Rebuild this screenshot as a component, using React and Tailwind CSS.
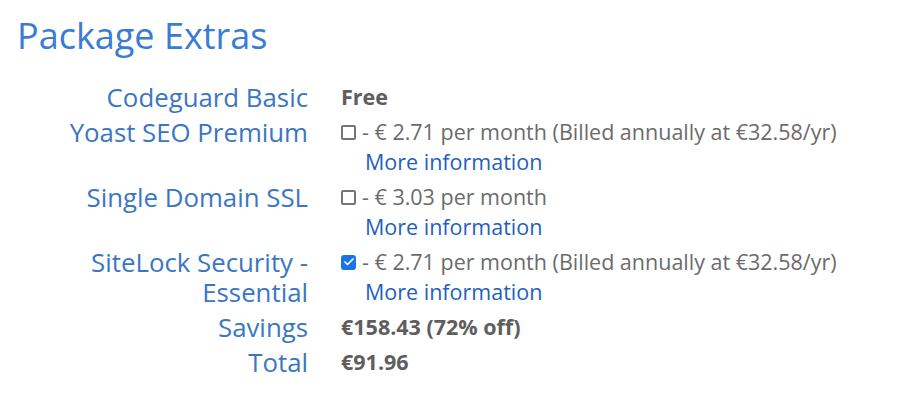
import { Check } from 'lucide-react';

const rows = [
  { label: ['Codeguard Basic'], value: 'Free', bold: true },
  { label: ['Yoast SEO Premium'], value: '- € 2.71 per month (Billed annually at €32.58/yr)', box: 'off', more: true },
  { label: ['Single Domain SSL'], value: '- € 3.03 per month', box: 'off', more: true },
  { label: ['SiteLock Security -', 'Essential'], value: '- € 2.71 per month (Billed annually at €32.58/yr)', box: 'on', more: true },
  { label: ['Savings'], value: '€158.43 (72% off)', bold: true },
  { label: ['Total'], value: '€91.96', bold: true },
];

function Box({ on }) {
  if (on) {
    return (
      <span className="inline-flex items-center justify-center w-[15px] h-[15px] rounded-[3px] bg-[#1a73e8] mr-[6px] shrink-0">
        <Check size={12} strokeWidth={3.5} className="text-white" />
      </span>
    );
  }
  return (
    <span className="inline-block w-[15px] h-[15px] rounded-[2px] border-2 border-[#767676] bg-white mr-[6px] shrink-0" />
  );
}

export default function App() {
  return (
    <div className="min-h-screen bg-white px-[17px] pt-[12px]" style={{ fontFamily: '"Open Sans", sans-serif' }}>
      <h1 className="text-[36px] leading-[48px] text-[#3a7bd5]">Package Extras</h1>
      <div className="mt-[22px] grid grid-cols-[291px_1fr] gap-x-[33px] gap-y-[5px]">
        {rows.map((r, i) => (
          <div key={i} className="contents">
            <div className="text-right text-[25.8px] leading-[30px] text-[#3a76c4]">
              {r.label.map((l, j) => (
                <div key={j}>{l}</div>
              ))}
            </div>
            <div className="text-[21.5px] leading-[30px] text-[#6b6b6b]">
              {r.bold ? (
                <div className="font-bold text-[#5e5e5e]">{r.value}</div>
              ) : (
                <div className="flex items-center">
                  <Box on={r.box === 'on'} />
                  <span>{r.value}</span>
                </div>
              )}
              {r.more && <div className="pl-[24px] text-[#1f5fc0]">More information</div>}
            </div>
          </div>
        ))}
      </div>
    </div>
  );
}
